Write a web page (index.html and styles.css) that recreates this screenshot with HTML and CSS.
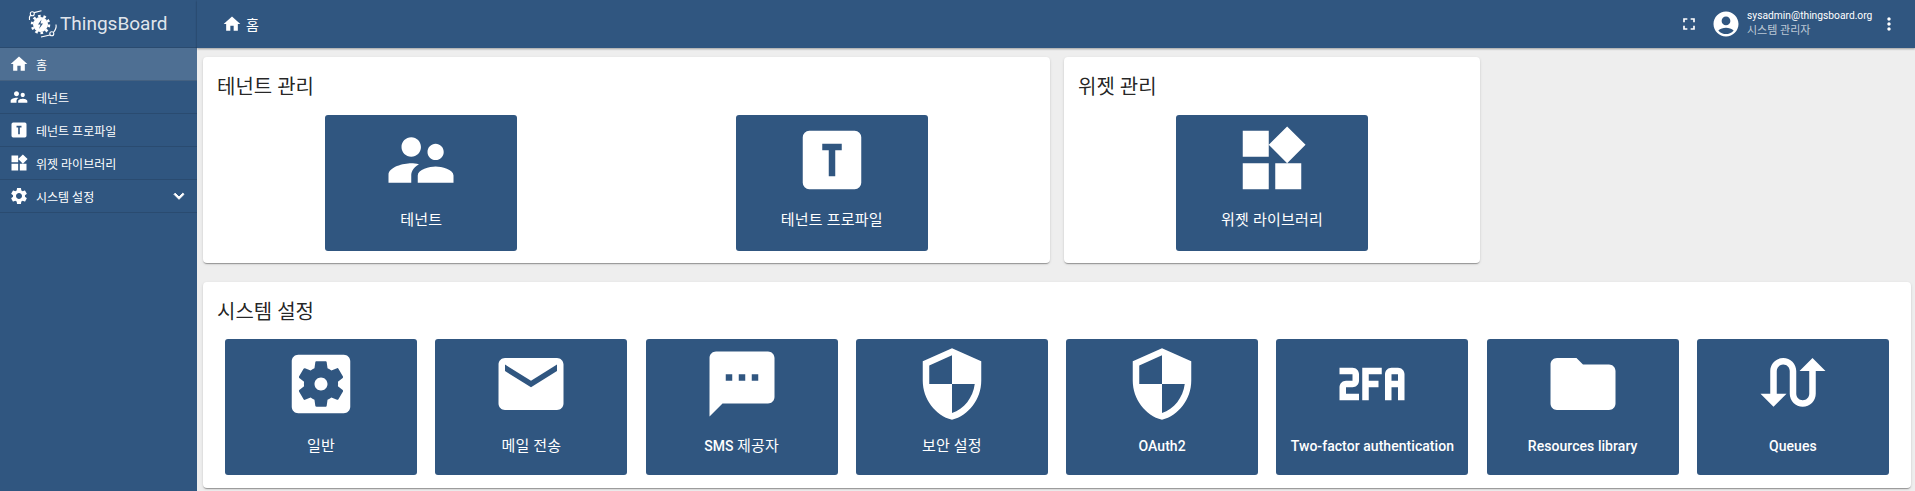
FILE: index.html
```html
<!DOCTYPE html>
<html lang="ko">
<head>
    <meta charset="UTF-8">
    <meta name="viewport" content="width=device-width, initial-scale=1.0">
    <title>ThingsBoard | 홈</title>
    <link rel="stylesheet" href="styles.css">
</head>
<body>
    <div class="app">
        <aside class="sidebar">
            <div class="logo">
                <svg class="logo-mark" viewBox="0 0 30 30">
                    <path class="logo-orbit" d="M2.500 10C2.200 8 2.600 6 3.600 5M7 2.600L14.500 .7M29 14.500C29.500 17 28.500 20 26.300 22.500M23 25L14 27"/>
                    <circle class="logo-orbit" cx="5.300" cy="3.800" r="2"/>
                    <circle class="logo-orbit" cx="24.800" cy="23.800" r="2"/>
                    <circle class="logo-gear" cx="13.500" cy="14.500" r="7.500"/>
                    <circle class="logo-teeth" cx="13.500" cy="14.500" r="8.500"/>
                    <path class="logo-bolt" d="M14.500 9.500l-3.500 5h2.500l-1.500 4.500 4-5.500h-2.500z"/>
                </svg>
                <span class="logo-text">ThingsBoard</span>
            </div>
            <nav class="menu">
                <a class="menu-item active">
                    <svg class="menu-icon" viewBox="0 0 24 24"><path d="M10 20v-6h4v6h5v-8h3L12 3 2 12h3v8z"/></svg>
                    <span>홈</span>
                </a>
                <a class="menu-item">
                    <svg class="menu-icon" viewBox="0 0 24 24"><path d="M16.5 12c1.38 0 2.49-1.12 2.49-2.5S17.88 7 16.5 7C15.12 7 14 8.12 14 9.5s1.12 2.5 2.5 2.5zM9 11c1.66 0 2.99-1.34 2.99-3S10.66 5 9 5C7.34 5 6 6.34 6 8s1.34 3 3 3zm7.5 3c-1.83 0-5.5.92-5.5 2.75V19h11v-2.25c0-1.83-3.67-2.75-5.5-2.75zM9 13c-2.33 0-7 1.17-7 3.5V19h7v-2.25c0-.85.33-2.34 2.37-3.47C10.5 13.1 9.66 13 9 13z"/></svg>
                    <span>테넌트</span>
                </a>
                <a class="menu-item">
                    <svg class="menu-icon" viewBox="0 0 24 24"><path fill-rule="evenodd" d="M9 7V9H11V17H13V9H15V7H9M5 3H19A2 2 0 0 1 21 5V19A2 2 0 0 1 19 21H5A2 2 0 0 1 3 19V5A2 2 0 0 1 5 3Z"/></svg>
                    <span>테넌트 프로파일</span>
                </a>
                <a class="menu-item">
                    <svg class="menu-icon" viewBox="0 0 24 24"><path d="M13 13v8h8v-8h-8zM3 21h8v-8H3v8zM3 3v8h8V3H3zm13.66-1.31L11 7.34 16.66 13l5.66-5.66-5.66-5.65z"/></svg>
                    <span>위젯 라이브러리</span>
                </a>
                <a class="menu-item">
                    <svg class="menu-icon" viewBox="0 0 24 24"><path d="M19.14 12.94c.04-.3.06-.61.06-.94 0-.32-.02-.64-.07-.94l2.03-1.58c.18-.14.23-.41.12-.61l-1.92-3.32c-.12-.22-.37-.29-.59-.22l-2.39.96c-.5-.38-1.03-.7-1.62-.94L14.4 2.81c-.04-.24-.24-.41-.48-.41h-3.84c-.24 0-.43.17-.47.41L9.25 5.35c-.59.24-1.13.57-1.62.94l-2.39-.96c-.22-.08-.47 0-.59.22L2.74 8.87c-.12.21-.08.47.12.61l2.03 1.58c-.05.3-.09.63-.09.94s.02.64.07.94l-2.03 1.58c-.18.14-.23.41-.12.61l1.92 3.32c.12.22.37.29.59.22l2.39-.96c.5.38 1.03.7 1.62.94l.36 2.54c.05.24.24.41.48.41h3.84c.24 0 .44-.17.47-.41l.36-2.54c.59-.24 1.13-.56 1.62-.94l2.39.96c.22.08.47 0 .59-.22l1.92-3.32c.12-.22.07-.47-.12-.61l-2.01-1.58zM12 15.6c-1.98 0-3.6-1.62-3.6-3.6s1.62-3.6 3.6-3.6 3.6 1.62 3.6 3.6-1.62 3.6-3.6 3.6z"/></svg>
                    <span>시스템 설정</span>
                    <svg class="menu-arrow" viewBox="0 0 24 24"><path d="M16.59 8.59L12 13.17 7.41 8.59 6 10l6 6 6-6z"/></svg>
                </a>
            </nav>
        </aside>

        <div class="content">
            <header class="toolbar">
                <div class="crumb">
                    <svg class="crumb-icon" viewBox="0 0 24 24"><path d="M10 20v-6h4v6h5v-8h3L12 3 2 12h3v8z"/></svg>
                    <span>홈</span>
                </div>
                <svg class="fullscreen-icon" viewBox="0 0 24 24"><path d="M7 14H5v5h5v-2H7v-3zm-2-4h2V7h3V5H5v5zm12 7h-3v2h5v-5h-2v3zM14 5v2h3v3h2V5h-5z"/></svg>
                <svg class="avatar" viewBox="0 0 24 24"><path d="M12 2C6.48 2 2 6.48 2 12s4.48 10 10 10 10-4.48 10-10S17.52 2 12 2zm0 4c1.93 0 3.5 1.57 3.5 3.5S13.93 13 12 13s-3.5-1.57-3.5-3.5S10.07 6 12 6zm0 14c-2.03 0-4.43-.82-6.14-2.88C7.55 15.8 9.68 15 12 15s4.45.8 6.14 2.12C16.43 19.18 14.03 20 12 20z"/></svg>
                <div class="user">
                    <div class="user-name">sysadmin@thingsboard.org</div>
                    <div class="user-role">시스템 관리자</div>
                </div>
                <svg class="more-icon" viewBox="0 0 24 24"><path d="M12 8c1.1 0 2-.9 2-2s-.9-2-2-2-2 .9-2 2 .9 2 2 2zm0 2c-1.1 0-2 .9-2 2s.9 2 2 2 2-.9 2-2-.9-2-2-2zm0 6c-1.1 0-2 .9-2 2s.9 2 2 2 2-.9 2-2-.9-2-2-2z"/></svg>
            </header>

            <main class="dashboard">
                <div class="card-row">
                    <section class="card card-tenants">
                        <h2>테넌트 관리</h2>
                        <div class="tiles tiles-2">
                            <a class="tile">
                                <svg viewBox="0 0 24 24"><path d="M16.5 12c1.38 0 2.49-1.12 2.49-2.5S17.88 7 16.5 7C15.12 7 14 8.12 14 9.5s1.12 2.5 2.5 2.5zM9 11c1.66 0 2.99-1.34 2.99-3S10.66 5 9 5C7.34 5 6 6.34 6 8s1.34 3 3 3zm7.5 3c-1.83 0-5.5.92-5.5 2.75V19h11v-2.25c0-1.83-3.67-2.75-5.5-2.75zM9 13c-2.33 0-7 1.17-7 3.5V19h7v-2.25c0-.85.33-2.34 2.37-3.47C10.5 13.1 9.66 13 9 13z"/></svg>
                                <span class="ko">테넌트</span>
                            </a>
                            <a class="tile">
                                <svg viewBox="0 0 24 24"><path fill-rule="evenodd" d="M9 7V9H11V17H13V9H15V7H9M5 3H19A2 2 0 0 1 21 5V19A2 2 0 0 1 19 21H5A2 2 0 0 1 3 19V5A2 2 0 0 1 5 3Z"/></svg>
                                <span class="ko">테넌트 프로파일</span>
                            </a>
                        </div>
                    </section>
                    <section class="card card-widgets">
                        <h2>위젯 관리</h2>
                        <div class="tiles tiles-1">
                            <a class="tile">
                                <svg viewBox="0 0 24 24"><path d="M13 13v8h8v-8h-8zM3 21h8v-8H3v8zM3 3v8h8V3H3zm13.66-1.31L11 7.34 16.66 13l5.66-5.66-5.66-5.65z"/></svg>
                                <span class="ko">위젯 라이브러리</span>
                            </a>
                        </div>
                    </section>
                </div>

                <section class="card card-system">
                    <h2>시스템 설정</h2>
                    <div class="tiles tiles-8">
                        <a class="tile">
                            <svg viewBox="0 0 24 24"><path fill-rule="evenodd" d="M12 10c-1.1 0-2 .9-2 2s.9 2 2 2 2-.9 2-2-.9-2-2-2zm7-7H5c-1.11 0-2 .9-2 2v14c0 1.1.89 2 2 2h14c1.11 0 2-.9 2-2V5c0-1.1-.89-2-2-2zm-1.75 9c0 .23-.02.46-.05.68l1.48 1.16c.13.11.17.3.08.45l-1.4 2.42c-.09.15-.27.21-.43.15l-1.74-.7c-.36.28-.76.51-1.18.69l-.26 1.85c-.03.17-.18.3-.35.3h-2.8c-.17 0-.32-.13-.35-.29l-.26-1.85c-.43-.18-.82-.41-1.18-.69l-1.74.7c-.16.06-.34 0-.43-.15l-1.4-2.42c-.09-.15-.05-.34.08-.45l1.48-1.16c-.03-.23-.05-.46-.05-.69 0-.23.02-.46.05-.68l-1.48-1.16c-.13-.11-.17-.3-.08-.45l1.4-2.42c.09-.15.27-.21.43-.15l1.74.7c.36-.28.76-.51 1.18-.69l.26-1.85c.03-.17.18-.3.35-.3h2.8c.17 0 .32.13.35.29l.26 1.85c.43.18.82.41 1.18.69l1.74-.7c.16-.06.34 0 .43.15l1.4 2.42c.09.15.05.34-.08.45l-1.48 1.16c.03.23.05.46.05.69z"/></svg>
                            <span class="ko">일반</span>
                        </a>
                        <a class="tile">
                            <svg viewBox="0 0 24 24"><path d="M20 4H4c-1.1 0-1.99.9-1.99 2L2 18c0 1.1.9 2 2 2h16c1.1 0 2-.9 2-2V6c0-1.1-.9-2-2-2zm0 4l-8 5-8-5V6l8 5 8-5v2z"/></svg>
                            <span class="ko">메일 전송</span>
                        </a>
                        <a class="tile">
                            <svg viewBox="0 0 24 24"><path d="M20 2H4c-1.1 0-1.99.9-1.99 2L2 22l4-4h14c1.1 0 2-.9 2-2V4c0-1.1-.9-2-2-2zM9 11H7V9h2v2zm4 0h-2V9h2v2zm4 0h-2V9h2v2z"/></svg>
                            <span>SMS <span class="ko">제공자</span></span>
                        </a>
                        <a class="tile">
                            <svg viewBox="0 0 24 24"><path d="M12 1L3 5v6c0 5.55 3.84 10.74 9 12 5.16-1.26 9-6.45 9-12V5l-9-4zm0 10.99h7c-.53 4.12-3.28 7.79-7 8.94V12H5V6.3l7-3.11v8.8z"/></svg>
                            <span class="ko">보안 설정</span>
                        </a>
                        <a class="tile">
                            <svg viewBox="0 0 24 24"><path d="M12 1L3 5v6c0 5.55 3.84 10.74 9 12 5.16-1.26 9-6.45 9-12V5l-9-4zm0 10.99h7c-.53 4.12-3.28 7.79-7 8.94V12H5V6.3l7-3.11v8.8z"/></svg>
                            <span>OAuth2</span>
                        </a>
                        <a class="tile">
                            <svg viewBox="0 0 24 24"><path fill-rule="evenodd" d="M2 7V9H6V11H4C2.9 11 2 11.9 2 13V17H8V15H4V13H6C7.11 13 8 12.11 8 11V9C8 7.9 7.11 7 6 7H2M9 7V17H11V13H14V11H11V9H15V7H9M18 7C16.9 7 16 7.9 16 9V17H18V13H20V17H22V9C22 7.9 21.11 7 20 7H18M18 9H20V11H18V9Z"/></svg>
                            <span>Two-factor authentication</span>
                        </a>
                        <a class="tile">
                            <svg viewBox="0 0 24 24"><path d="M10 4H4c-1.1 0-1.99.9-1.99 2L2 18c0 1.1.9 2 2 2h16c1.1 0 2-.9 2-2V8c0-1.1-.9-2-2-2h-8l-2-2z"/></svg>
                            <span>Resources library</span>
                        </a>
                        <a class="tile">
                            <svg viewBox="0 0 24 24"><path d="M18 4l-4 4h3v7c0 1.1-.9 2-2 2s-2-.9-2-2V8c0-2.21-1.79-4-4-4S5 5.79 5 8v7H2l4 4 4-4H7V8c0-1.1.9-2 2-2s2 .9 2 2v7c0 2.21 1.79 4 4 4s4-1.79 4-4V8h3l-4-4z"/></svg>
                            <span>Queues</span>
                        </a>
                    </div>
                </section>
            </main>
        </div>
    </div>
</body>
</html>
```

FILE: styles.css
```css
* {
    box-sizing: border-box;
}
html, body {
    height: 100%;
}
body {
    margin: 0;
    overflow: hidden;
    background: #eeeeee;
    color: rgba(0,0,0,0.87);
    font-family: Roboto, "Noto Sans CJK KR", sans-serif;
}
svg {
    display: block;
    fill: currentColor;
    flex: none;
}
.app {
    display: flex;
    height: 100%;
}

/* sidebar */
.sidebar {
    width: 197px;
    flex: none;
    background: #305680;
    color: white;
}
.logo {
    height: 48px;
    display: flex;
    align-items: center;
    padding-left: 27px;
    gap: 3px;
    border-bottom: 1px solid rgba(0,0,0,0.12);
}
.logo-mark {
    width: 30px;
    height: 30px;
    overflow: visible;
    margin-top: 2px;
}
.logo-orbit {
    fill: none;
    stroke: currentColor;
    stroke-width: 1.1;
}
.logo-teeth {
    fill: none;
    stroke: currentColor;
    stroke-width: 2.5;
    stroke-dasharray: 2.6 2.74;
}
.logo-bolt {
    fill: #305680;
}
.logo-text {
    font-size: 19px;
    color: rgba(255,255,255,0.87);
}
.menu-item {
    height: 33px;
    display: flex;
    align-items: center;
    padding-left: 9px;
    gap: 7px;
    font-size: 12px;
    border-bottom: 1px solid rgba(0,0,0,0.12);
}
.menu-item.active {
    background: rgba(255,255,255,0.15);
}
.menu-icon {
    width: 20px;
    height: 20px;
}
.menu-arrow {
    width: 20px;
    height: 20px;
    margin-left: auto;
    margin-right: 8px;
    stroke: currentColor;
    stroke-width: 1.2;
}

/* toolbar */
.content {
    flex: 1;
    min-width: 0;
}
.toolbar {
    height: 48px;
    display: flex;
    align-items: center;
    background: #305680;
    color: white;
    box-shadow: 0 1px 2px rgba(0,0,0,0.35);
    padding-left: 25px;
}
.crumb {
    display: flex;
    align-items: center;
    gap: 4px;
    font-size: 14px;
}
.crumb-icon {
    width: 20px;
    height: 20px;
}
.fullscreen-icon {
    width: 20px;
    height: 20px;
    margin-left: auto;
}
.avatar {
    width: 30px;
    height: 30px;
    margin-left: 12px;
}
.user {
    margin-left: 6px;
    margin-bottom: 3px;
    width: 132px;
    font-size: 10.25px;
    line-height: 15px;
}
.user-role {
    font-size: 11px;
    color: rgba(255,255,255,0.7);
}
.more-icon {
    width: 20px;
    height: 20px;
    margin-right: 16px;
}

/* cards */
.dashboard {
    padding: 9px 4px 0 6px;
}
.card-row {
    display: flex;
    gap: 14px;
    margin-bottom: 19px;
}
.card {
    background: white;
    border-radius: 4px;
    height: 206px;
    padding: 13px;
    box-shadow: 0 2px 1px -1px rgba(0,0,0,0.2), 0 1px 1px 0 rgba(0,0,0,0.14), 0 1px 3px 0 rgba(0,0,0,0.12);
}
.card-tenants {
    width: 847px;
}
.card-widgets {
    width: 416px;
}
.card h2 {
    margin: 0;
    height: 45px;
    padding: 1px 0 0 1px;
    font-size: 20px;
    font-weight: 400;
    line-height: 32px;
}
.card-system h2 {
    height: 44px;
}
.tiles {
    display: grid;
    justify-items: center;
}
.tiles-2 {
    grid-template-columns: repeat(2, 1fr);
}
.tiles-1 {
    grid-template-columns: 1fr;
}
.tiles-8 {
    grid-template-columns: repeat(8, 1fr);
}
.tile {
    width: 192px;
    height: 136px;
    display: flex;
    flex-direction: column;
    align-items: center;
    padding-top: 6px;
    background: #305680;
    color: white;
    border-radius: 3px;
    font-size: 14px;
    font-weight: 500;
    letter-spacing: 0.05px;
}
.tile svg {
    width: 78px;
    height: 78px;
}
.tile > span {
    margin-top: 11px;
    line-height: 20px;
    white-space: nowrap;
}
.card-system .tile > span {
    margin-top: 13px;
}
.ko {
    font-size: 15px;
    font-weight: 400;
    letter-spacing: 0.2px;
}
```
